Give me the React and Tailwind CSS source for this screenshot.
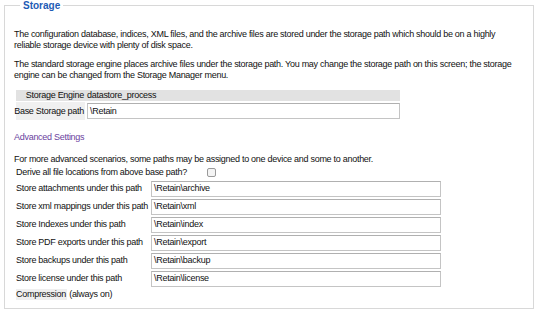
export default function App() {
  const rows = [
    ["Store attachments under this path", "\\Retain\\archive"],
    ["Store xml mappings under this path", "\\Retain\\xml"],
    ["Store Indexes under this path", "\\Retain\\index"],
    ["Store PDF exports under this path", "\\Retain\\export"],
    ["Store backups under this path", "\\Retain\\backup"],
    ["Store license under this path", "\\Retain\\license"],
  ];
  return (
    <div
      className="w-[538px] h-[313px] bg-white text-[9px] leading-[11px] tracking-[-0.28px] text-[#111] overflow-hidden"
      style={{ fontFamily: "Tahoma, 'Liberation Sans', Arial, sans-serif" }}
    >
      <fieldset className="mx-[4px] mt-0 h-[309px] border border-[#d8d8d8] pl-[9px] pr-[10px] pt-0">
        <legend className="ml-[6px] px-[3px] text-[10px] tracking-normal font-bold text-[#1d5bb5]">Storage</legend>
        <p className="mt-[18px] w-[502px]">
          The configuration database, indices, XML files, and the archive files are stored under the storage path which should be on a highly reliable storage device with plenty of disk space.
        </p>
        <p className="mt-[8px] w-[502px]">
          The standard storage engine places archive files under the storage path. You may change the storage path on this screen; the storage engine can be changed from the Storage Manager menu.
        </p>
        <div className="mt-[9px] ml-[2px] w-[384px]">
          <div className="flex h-[11px] bg-[#e2e2e2] items-center">
            <div className="w-[69px] text-right pr-[1px] whitespace-nowrap">Storage Engine</div>
            <div className="pl-[2px]">datastore_process</div>
          </div>
          <div className="flex h-[18px] items-center mt-[1px]">
            <div className="w-[69px] h-full flex items-center justify-end pr-[1px] bg-[#f0f0f0] whitespace-nowrap">Base Storage path</div>
            <div className="ml-[2px] flex-1 h-[16px] border border-[#c4c4c4] border-t-[#b0b0b0] flex items-center pl-[2px]">\Retain</div>
          </div>
        </div>
        <div className="mt-[12px] text-[#6b3fa0]">Advanced Settings</div>
        <div className="mt-[11px]">For more advanced scenarios, some paths may be assigned to one device and some to another.</div>
        <div className="ml-[2px] flex items-center h-[12px] mt-[1px]">
          <span>Derive all file locations from above base path?</span>
          <span className="ml-[20px] w-[9px] h-[9px] border border-[#9a9a9a] rounded-[2px] bg-[#f4f4f4]" />
        </div>
        <div className="ml-[2px] mt-[2px] flex flex-col gap-[1px]">
          {rows.map(([l, v]) => (
            <div key={l} className="flex items-center h-[17px]">
              <div className="w-[135px] whitespace-nowrap">{l}</div>
              <div className="w-[290px] h-[16px] border border-[#c4c4c4] border-t-[#b0b0b0] flex items-center pl-[2px]">{v}</div>
            </div>
          ))}
        </div>
        <div className="ml-[2px] mt-[2px] flex">
          <span className="bg-[#efefef] pr-[1px]">Compression</span>
          <span className="whitespace-pre"> (always on)</span>
        </div>
      </fieldset>
    </div>
  );
}
